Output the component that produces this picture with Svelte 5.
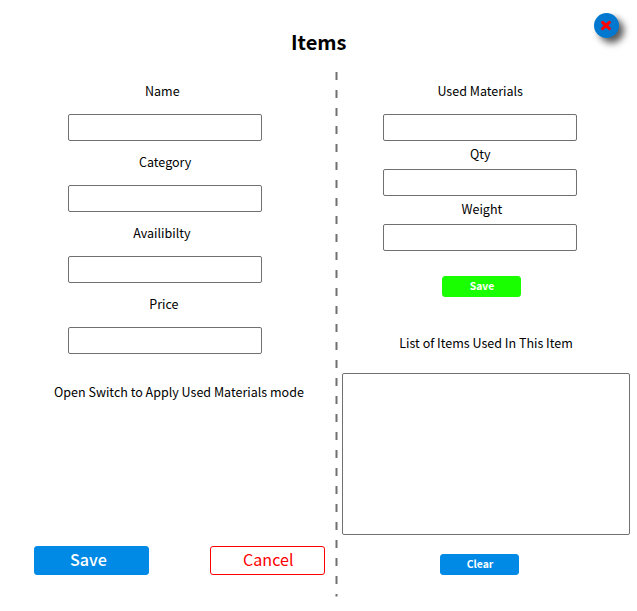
<script>
  const itemFields = [
    { id: 'name', label: 'Name', indent: 77 },
    { id: 'category', label: 'Category', indent: 71 },
    { id: 'availability', label: 'Availibilty', indent: 65.3 },
    { id: 'price', label: 'Price', indent: 81.3 }
  ];
  const materialFields = [
    { id: 'material', label: 'Used Materials', indent: 54.4 },
    { id: 'qty', label: 'Qty', indent: 87 },
    { id: 'weight', label: 'Weight', indent: 78.5 }
  ];
</script>

<main>
  <button class="close" aria-label="Close">
    <svg width="25" height="25" viewBox="0 0 25 25">
      <path d="M8.6 9.3 15.4 15.7M15.4 9.3 8.6 15.7" stroke="#f00" stroke-width="3" stroke-linecap="round" />
    </svg>
  </button>
  <h1>Items</h1>
  <div class="columns">
    <section class="item">
      {#each itemFields as f}
        <div class="field">
          <label for={f.id} style:padding-left="{f.indent}px">{f.label}</label>
          <input id={f.id} />
        </div>
      {/each}
      <p class="hint">Open Switch to Apply Used Materials mode</p>
      <div class="actions">
        <button class="big save">Save</button>
        <button class="big cancel">Cancel</button>
      </div>
    </section>
    <svg class="divider" width="4" height="525" viewBox="0 0 4 525">
      <path d="M1.5 0V524.5" stroke="#707070" stroke-width="2" stroke-dasharray="8 10" />
    </svg>
    <section class="materials">
      {#each materialFields as f}
        <div class="field">
          <label for={f.id} style:padding-left="{f.indent}px">{f.label}</label>
          <input id={f.id} />
        </div>
      {/each}
      <button class="small green">Save</button>
      <p class="list-title">List of Items Used In This Item</p>
      <textarea aria-label="List of items"></textarea>
      <button class="small clear">Clear</button>
    </section>
  </div>
</main>

<style>
  :global(body) { background: #fff; }
  main {
    position: relative;
    width: 637px;
    height: 611px;
    overflow: hidden;
    background: #fff;
    color: #000;
    font: 12.53px/20px "Noto Sans CJK SC", sans-serif;
  }
  input, textarea, button {
    display: block;
    box-sizing: border-box;
    margin: 0;
    padding: 0;
    border: 1px solid #707070;
    border-radius: 2px;
    background: #fff;
    font: inherit;
    outline: none;
    resize: none;
  }
  h1 {
    box-sizing: border-box;
    height: 72px;
    margin: 0;
    padding: 27px 0 0 291px;
    font-size: 20px;
    line-height: 30px;
    font-weight: 700;
  }
  p { margin: 0; white-space: nowrap; }
  .columns { display: flex; align-items: flex-start; }
  section { box-sizing: border-box; padding-top: 9px; }
  .item { width: 335px; }
  .divider { display: block; flex: none; }
  .materials { width: 298px; }
  .field { width: 194px; }
  label { display: block; height: 20px; white-space: nowrap; }
  input { width: 194px; height: 27px; }
  .item .field { margin: 0 0 11px 68px; }
  .item input { margin-top: 13px; }
  .materials .field { margin: 0 0 3px 44px; }
  .materials input { margin-top: 5px; }
  .materials .field:first-child input { margin-top: 13px; }
  .hint { padding: 17px 0 0 54px; }
  .actions { display: flex; gap: 61px; margin: 144px 0 0 34px; }
  .big { width: 115px; height: 29px; font-size: 16.1px; line-height: 25px; padding-bottom: 2px; border-radius: 3px; text-align: left; }
  .save { border-color: #008ae6; background: #008ae6; color: #fff; font-weight: 500; padding-left: 35px; }
  .cancel { border-color: #f00; color: #f00; padding-left: 32px; }
  .small { width: 79px; height: 21px; font-size: 10.4px; line-height: 17px; padding: 0 0 2px 1px; font-weight: 700; color: #fff; border-radius: 3px; }
  .green { margin: 25px 0 0 103px; border-color: #1aff00; background: #1aff00; }
  .list-title { padding: 36px 0 0 60.3px; }
  textarea { width: 288px; height: 162px; margin: 20px 0 0 3px; }
  .clear { margin: 19px 0 0 101px; border-color: #008ae6; background: #008ae6; }
  .close {
    position: absolute;
    left: 594px;
    top: 13px;
    width: 25px;
    height: 25px;
    border: 0;
    border-radius: 50%;
    background: #0078d0;
    box-shadow: 5px 5px 7px rgba(0, 0, 0, 0.65);
  }
  .close svg { display: block; }
</style>
